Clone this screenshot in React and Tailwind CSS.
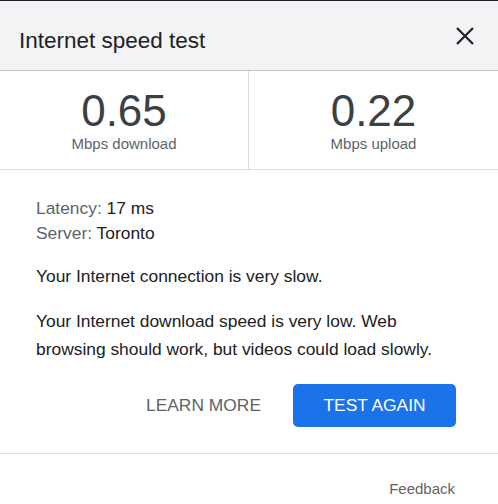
import React from 'react';

const font = { fontFamily: '"Liberation Sans", Arial, sans-serif' };

function CloseIcon() {
  return (
    <svg width="18" height="18" viewBox="0 0 18 18" className="text-[#202124]">
      <path d="M1 1L17 17M17 1L1 17" stroke="currentColor" strokeWidth="2.2" fill="none" />
    </svg>
  );
}

function Stat({ value, label }) {
  return (
    <div className="flex flex-col items-center pt-[17px]">
      <span className="text-[44px] leading-[46px] text-[#3c4043]">{value}</span>
      <span className="text-[15px] leading-[20px] text-[#5f6368]">{label}</span>
    </div>
  );
}

export default function App() {
  return (
    <div className="w-[498px] h-[504px] bg-white border-t border-[#202124] overflow-hidden" style={font}>
      {/* Header */}
      <div className="h-[70px] bg-[#f1f3f4] border-b border-[#c6c6c6] flex items-center justify-between pl-[19px] pr-[24px]">
        <h1 className="text-[22.5px] text-[#202124] pt-[10px]">Internet speed test</h1>
        <button className="p-0">
          <CloseIcon />
        </button>
      </div>

      {/* Results */}
      <div className="h-[99px] grid grid-cols-2 border-b border-[#dadce0]">
        <div className="border-r border-[#dadce0]">
          <Stat value="0.65" label="Mbps download" />
        </div>
        <Stat value="0.22" label="Mbps upload" />
      </div>

      {/* Details */}
      <div className="pl-[36px] pr-[42px] pt-[26px] text-[17.4px] text-[#202124]">
        <div className="leading-[25px]">
          <div>
            <span className="text-[#5f6368]">Latency:</span> 17 ms
          </div>
          <div>
            <span className="text-[#5f6368]">Server:</span> Toronto
          </div>
        </div>
        <p className="mt-[16px] leading-[28px]">Your Internet connection is very slow.</p>
        <p className="mt-[17px] leading-[28px]">
          Your Internet download speed is very low. Web browsing should work, but videos could load slowly.
        </p>
        <div className="mt-[21px] flex justify-end items-center gap-4">
          <button className="px-4 h-[43px] text-[17.4px] text-[#5f6368]">LEARN MORE</button>
          <button className="w-[163px] h-[43px] rounded-[5px] bg-[#1a73e8] text-white text-[17.4px]">
            TEST AGAIN
          </button>
        </div>
      </div>

      <div className="mt-[26px] border-t border-[#dadce0] pt-[26px] pr-[43px] flex justify-end">
        <span className="text-[15px] leading-[18px] text-[#5f6368]">Feedback</span>
      </div>
    </div>
  );
}
